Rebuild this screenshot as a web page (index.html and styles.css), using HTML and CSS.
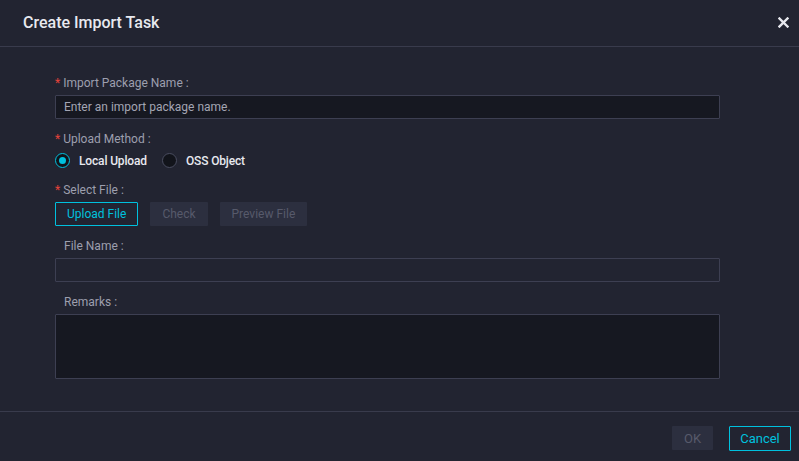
FILE: index.html
```html
<!DOCTYPE html>
<html lang="en">
<head>
    <meta charset="UTF-8">
    <meta name="viewport" content="width=device-width, initial-scale=1.0">
    <title>Create Import Task</title>
    <link rel="stylesheet" href="styles.css">
</head>
<body>

    <div class="dialog">
        <div class="dialog-header">
            <h2>Create Import Task</h2>
            <span class="close">
                <svg width="11" height="11" viewBox="0 0 11 11">
                    <path d="M1.5 1.5 L9.5 9.5 M9.5 1.5 L1.5 9.5" stroke="#e8e9ef" stroke-width="2.4" stroke-linecap="square"/>
                </svg>
            </span>
        </div>

        <div class="dialog-body">
            <div class="form-item">
                <label class="form-label"><span class="req">*</span> Import Package Name :</label>
                <input type="text" class="input-field" placeholder="Enter an import package name.">
            </div>

            <div class="form-item">
                <label class="form-label"><span class="req">*</span> Upload Method :</label>
                <div class="radio-group">
                    <label class="radio"><span class="radio-dot checked"></span>Local Upload</label>
                    <label class="radio"><span class="radio-dot"></span>OSS Object</label>
                </div>
            </div>

            <div class="form-item">
                <label class="form-label"><span class="req">*</span> Select File :</label>
                <div class="button-row">
                    <button class="btn btn-outline">Upload File</button>
                    <button class="btn btn-disabled">Check</button>
                    <button class="btn btn-disabled">Preview File</button>
                </div>
            </div>

            <div class="form-item">
                <label class="form-label indent">File Name :</label>
                <input type="text" class="input-field input-plain">
            </div>

            <div class="form-item">
                <label class="form-label indent">Remarks :</label>
                <textarea class="input-field textarea"></textarea>
            </div>
        </div>

        <div class="dialog-footer">
            <button class="btn btn-disabled btn-ok">OK</button>
            <button class="btn btn-outline btn-cancel">Cancel</button>
        </div>
    </div>

</body>
</html>
```

FILE: styles.css
```css
* {
    box-sizing: border-box;
}

body {
    margin: 0;
    font-family: Roboto, "Liberation Sans", Arial, sans-serif;
    background-color: #222431;
    color: #9d9fae;
}

.dialog {
    width: 799px;
    height: 461px;
    background: #222431;
}

.dialog-header {
    height: 47px;
    display: flex;
    align-items: center;
    justify-content: space-between;
    padding: 0 10px 0 23px;
    border-bottom: 1px solid #393b4c;
}

.dialog-header h2 {
    margin: 0;
    font-size: 16px;
    font-weight: 500;
    color: #e8e9ef;
    padding-bottom: 2px;
}

.close {
    display: flex;
    cursor: pointer;
    padding-bottom: 2px;
}

.dialog-body {
    padding: 27px 79px 21px 55px;
}

.form-item {
    margin-bottom: 11px;
}

.form-label {
    display: block;
    font-size: 12px;
    line-height: 18px;
    margin-bottom: 3px;
    color: #9d9fae;
}

.form-label.indent {
    padding-left: 9px;
}

.req {
    color: #e5423a;
}

.input-field {
    display: block;
    width: 100%;
    height: 24px;
    padding: 0 8px;
    font-family: inherit;
    font-size: 12px;
    color: #d0d2dc;
    background: #161821;
    border: 1px solid #3d3f52;
    border-radius: 1px;
    outline: none;
}

.input-field::placeholder {
    color: #a3a5b3;
}

.input-plain {
    background: transparent;
}

.textarea {
    height: 65px;
    resize: none;
    padding: 6px 8px;
}

.radio-group {
    display: flex;
    align-items: center;
    height: 19px;
    margin-top: 1px;
}

.radio {
    display: flex;
    align-items: center;
    font-size: 12px;
    font-weight: 500;
    letter-spacing: -0.15px;
    color: #e8e9ef;
    margin-right: 15px;
    cursor: pointer;
}

.radio-dot {
    width: 15px;
    height: 15px;
    border-radius: 50%;
    border: 1px solid #4a4d60;
    background: #12141b;
    margin-right: 9px;
    position: relative;
}

.radio-dot.checked {
    border-color: #00c1de;
}

.radio-dot.checked::after {
    content: "";
    position: absolute;
    left: 3px;
    top: 3px;
    width: 7px;
    height: 7px;
    border-radius: 50%;
    background: #00c1de;
}

.button-row {
    display: flex;
    gap: 12px;
    margin-top: 1px;
}

.btn {
    height: 24px;
    padding: 0 11px;
    font-family: inherit;
    font-size: 12px;
    border-radius: 1px;
    cursor: pointer;
    background: transparent;
    border: 1px solid transparent;
}

.btn-outline {
    border-color: #00c1de;
    color: #00c1de;
}

.btn-disabled {
    background: #2c2f3f;
    color: #575a6b;
    cursor: not-allowed;
}

.dialog-footer {
    display: flex;
    justify-content: flex-end;
    align-items: center;
    gap: 16px;
    height: 49px;
    padding: 4px 8px 0 0;
    border-top: 1px solid #393b4c;
}

.btn-ok {
    width: 41px;
    padding: 0;
    font-size: 13px;
}

.btn-cancel {
    width: 62px;
    height: 25px;
    padding: 0;
    font-size: 13px;
}
```
